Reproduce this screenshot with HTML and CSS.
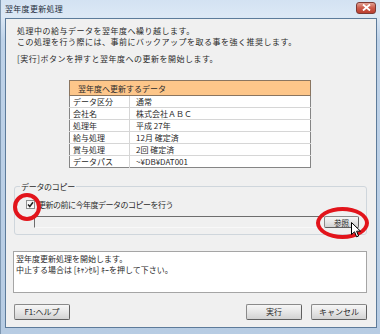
FILE: index.html
```html
<!DOCTYPE html>
<html lang="ja">
<head>
    <meta charset="UTF-8">
    <title>翌年度更新処理</title>
    <link rel="stylesheet" href="styles.css">
</head>
<body>
    <div class="window">
        <div class="titlebar">
            <span class="title">翌年度更新処理</span>
            <span class="close">
                <svg width="9" height="7" viewBox="0 0 9 7"><path d="M1 0.5 L8 6.5 M8 0.5 L1 6.5" stroke="#fff" stroke-width="1.8"/></svg>
            </span>
        </div>

        <div class="client">
            <p class="intro">処理中の給与データを翌年度へ繰り越します。<br>この処理を行う際には、事前にバックアップを取る事を強く推奨します。</p>
            <p class="intro note">[実行]ボタンを押すと翌年度への更新を開始します。</p>

            <table class="data">
                <tr><th colspan="2">翌年度へ更新するデータ</th></tr>
                <tr><td class="key">データ区分</td><td>通常</td></tr>
                <tr><td class="key">会社名</td><td>株式会社ＡＢＣ</td></tr>
                <tr><td class="key">処理年</td><td>平成 27年</td></tr>
                <tr><td class="key">給与処理</td><td>12月 確定済</td></tr>
                <tr><td class="key">賞与処理</td><td>2回 確定済</td></tr>
                <tr><td class="key">データパス</td><td>~¥DB¥DAT001</td></tr>
            </table>

            <fieldset class="copy">
                <legend>データのコピー</legend>
                <label class="check">
                    <span class="box">
                        <svg width="7" height="7" viewBox="0 0 7 7"><path d="M1 3.5 L2.8 5.5 L6 1.2" fill="none" stroke="#222" stroke-width="1.5"/></svg>
                    </span>
                    更新の前に今年度データのコピーを行う
                </label>
                <div class="path-row">
                    <div class="path"></div>
                    <button class="btn ref">参照</button>
                </div>
            </fieldset>

            <div class="message">翌年度更新処理を開始します。<br>中止する場合は [ｷｬﾝｾﾙ] ｷｰを押して下さい。</div>

            <div class="buttons">
                <button class="btn">F1:ヘルプ</button>
                <span class="spacer"></span>
                <button class="btn">実行</button>
                <button class="btn">キャンセル</button>
            </div>

            <!-- 注目マーク -->
            <span class="mark mark-check"></span>
            <span class="mark mark-ref"></span>
            <svg class="cursor" width="11" height="16" viewBox="0 0 11 16">
                <path d="M0.5 0.5 L0.5 12.5 L3.5 9.8 L5.6 14.8 L7.6 14 L5.6 9.2 L9.5 9.2 Z" fill="#fff" stroke="#000" stroke-width="1"/>
            </svg>
        </div>
    </div>
</body>
</html>
```

FILE: styles.css
```css
/* 全体 */
* {
    margin: 0;
    padding: 0;
    box-sizing: border-box;
}

body {
    width: 380px;
    height: 334px;
    overflow: hidden;
    font-family: "Noto Sans CJK JP", "Noto Sans", sans-serif;
    font-size: 8px;
    color: #2a2a2a;
    background: #bcd1e7;
}

/* ウィンドウ枠 */
.window {
    width: 380px;
    height: 334px;
    display: flex;
    flex-direction: column;
    padding: 0 3px 6px 4px;
    background: linear-gradient(to bottom, #d3e2f2 0, #dce8f5 16px, #bed2e8 40px, #b7cce3 100%);
    border-left: 1px solid #7f98b2;
}

.titlebar {
    height: 18px;
    display: flex;
    align-items: center;
    justify-content: space-between;
    padding: 0 1px 0 0;
}

.title {
    line-height: 11px;
    letter-spacing: 0.3px;
    color: #1d2b3a;
    margin-top: -1px;
}

.close {
    width: 20px;
    height: 12px;
    margin-top: -3px;
    display: flex;
    align-items: center;
    justify-content: center;
    background: linear-gradient(to bottom, #e2a093 0, #cc5a4a 50%, #bb3f30 100%);
    border: 1px solid #7d3a34;
    border-radius: 3px;
}

/* クライアント領域 */
.client {
    flex: 1;
    position: relative;
    background: #f0f0f0;
    border: 1px solid #5d7b9a;
    padding-top: 6px;
}

.intro {
    padding-left: 11px;
    line-height: 11px;
    letter-spacing: 0.5px;
}

.note {
    margin-top: 6px;
}

/* データ表 */
.data {
    margin: 16px 0 0 63px;
    width: 242px;
    border-collapse: collapse;
    background: #fff;
    border: 1px solid #858585;
}

.data th {
    height: 15px;
    text-align: left;
    font-weight: normal;
    padding-left: 8px;
    background: #fdc68a;
    border: 1px solid #8a7560;
}

.data td {
    height: 12px;
    line-height: 11px;
    padding: 0 0 0 6px;
    border-top: 1px solid #d6d6d6;
    white-space: nowrap;
}

.data td.key {
    width: 60px;
    padding-left: 3px;
    border-right: 1px solid #d6d6d6;
}

/* データのコピー */
.copy {
    margin: 13px 9px 0 8px;
    border: 1px solid #cfd6dc;
    border-radius: 3px;
    padding: 0 0 6px 0;
}

.copy legend {
    margin-left: 5px;
    padding: 0 1px;
    line-height: 11px;
    letter-spacing: -0.3px;
}

.check {
    display: flex;
    align-items: center;
    gap: 3px;
    margin: 7px 0 0 11px;
    line-height: 11px;
    letter-spacing: -0.5px;
}

.box {
    width: 9px;
    height: 9px;
    display: flex;
    align-items: center;
    justify-content: center;
    border: 1px solid #8e8f8f;
    background: linear-gradient(to bottom, #f4f4f4, #fff);
}

.path-row {
    display: flex;
    margin: 6px 0 0 19px;
}

.path {
    width: 290px;
    height: 12px;
    border-top: 1px solid #6d6d6d;
    border-left: 1px solid #6d6d6d;
    border-bottom: 1px solid #f8f8f8;
}

/* ボタン */
.btn {
    font-family: inherit;
    font-size: 8px;
    color: #2a2a2a;
    width: 56px;
    height: 16px;
    line-height: 12px;
    border: 1px solid #8a8a8a;
    border-right-color: #5f5f5f;
    border-bottom-color: #5f5f5f;
    border-radius: 2px;
    background: linear-gradient(to bottom, #f6f6f6 0, #e6e6e6 50%, #d2d2d2 100%);
}

.btn.ref {
    width: 35px;
    height: 12px;
    line-height: 9px;
    font-size: 7.5px;
}

/* メッセージ */
.message {
    margin: 16px 9px 0 7px;
    height: 42px;
    background: #fff;
    border: 1px solid #a5a5a5;
    padding: 1px 0 0 2px;
    line-height: 11px;
}

.buttons {
    display: flex;
    gap: 9px;
    margin: 11px 9px 0 8px;
}

.spacer {
    flex: 1;
}

/* 赤丸・カーソル */
.mark {
    position: absolute;
    border: 4px solid #e2141b;
    border-radius: 50%;
}

.mark-check {
    left: 7px;
    top: 174px;
    width: 28px;
    height: 28px;
}

.mark-ref {
    left: 310px;
    top: 188px;
    width: 53px;
    height: 32px;
}

.cursor {
    position: absolute;
    left: 345px;
    top: 203px;
}
```
